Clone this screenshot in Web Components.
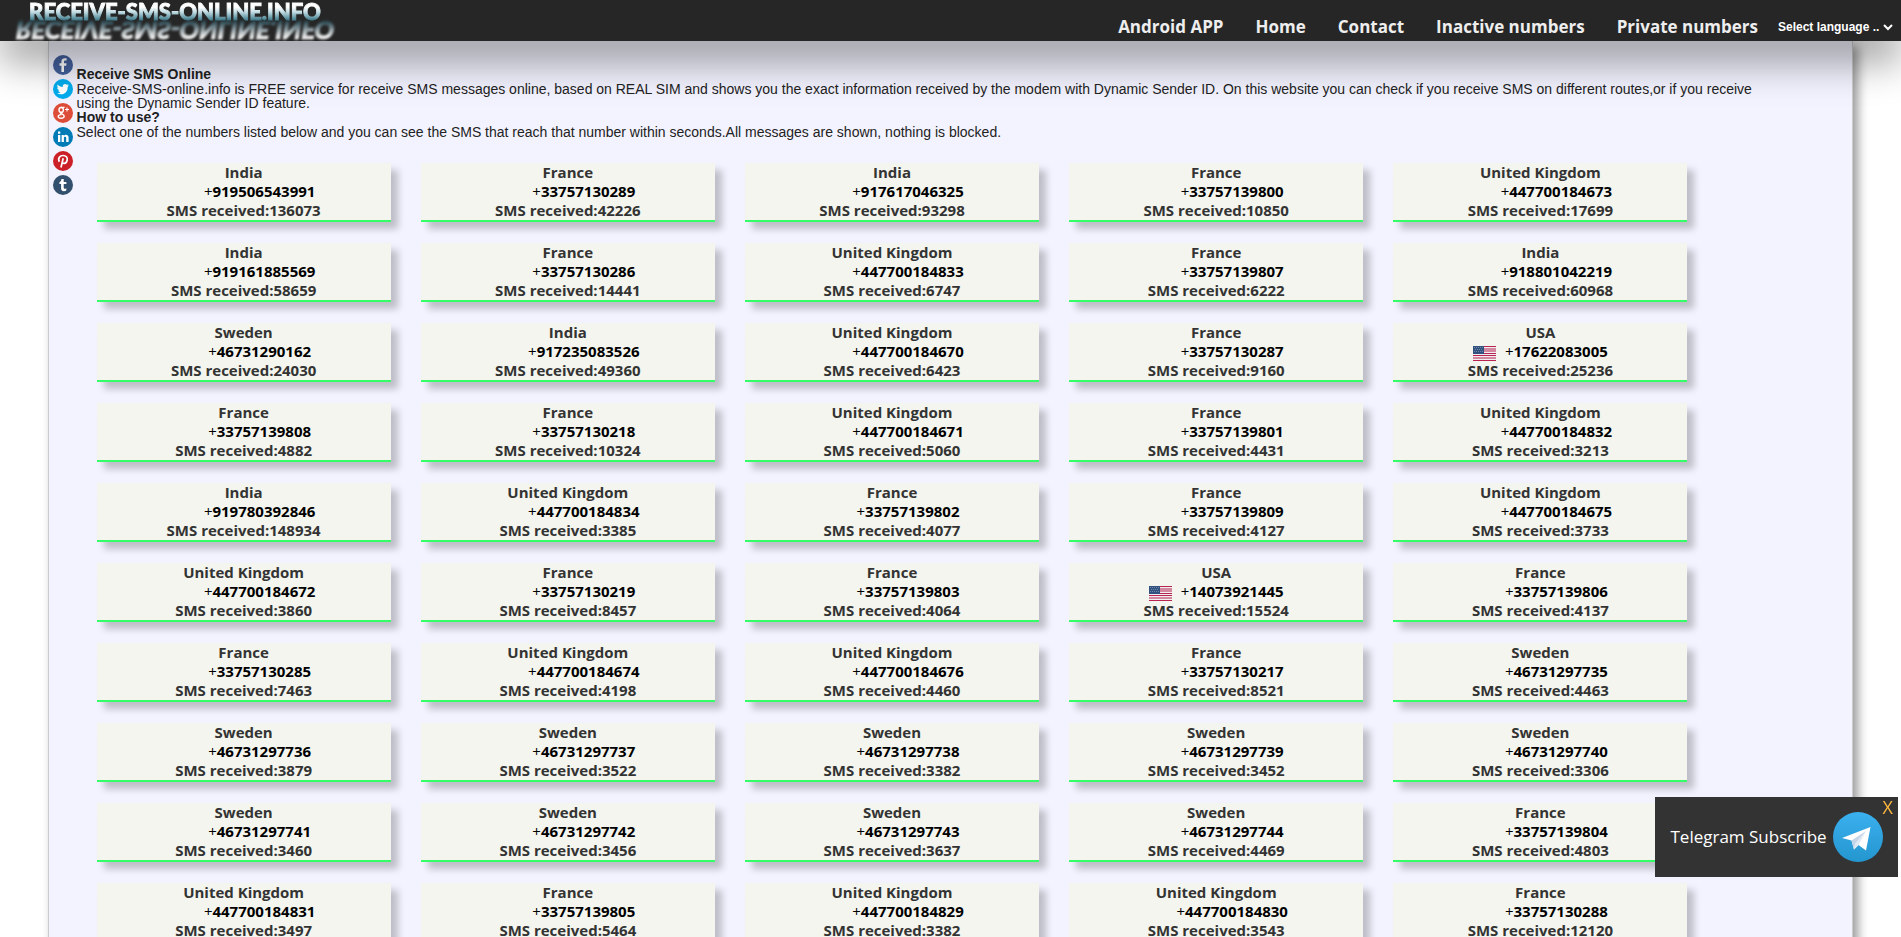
<!DOCTYPE html>
<html lang="en">
<head>
<meta charset="utf-8">
<title>Receive SMS Online</title>
<style>
	body{
		margin:0;
		background:#fff;
		font-family:"Open Sans", "Noto Sans", sans-serif;
		overflow:hidden;
		height:100vh;
	}
</style>
</head>
<body>
	<sms-header></sms-header>
	<sms-page>
		<social-links slot="social"></social-links>
		<sms-intro slot="intro">
			<h1 slot="title">Receive SMS Online</h1>
			<p slot="about">Receive-SMS-online.info is FREE service for receive SMS messages online, based on REAL SIM and shows you the exact information received by the modem with Dynamic Sender ID. On this website you can check if you receive SMS on different routes,or if you receive using the Dynamic Sender ID feature.</p>
			<h2 slot="howto">How to use?</h2>
			<p slot="steps">Select one of the numbers listed below and you can see the SMS that reach that number within seconds.All messages are shown, nothing is blocked.</p>
		</sms-intro>
		<number-list></number-list>
	</sms-page>
	<telegram-box>Telegram Subscribe</telegram-box>

<script>
class smsHeader extends HTMLElement {
	constructor(){
		super();
		this.attachShadow({mode:'open'});
	}
	connectedCallback(){
		this.shadowRoot.innerHTML = `
			<style>
				:host{
					display:block;
					position:relative;
					z-index:2;
					background:#262626;
					box-shadow:0 20px 40px rgba(0,0,0,.4);
				}
				header{
					display:flex;
					justify-content:space-between;
					height:41px;
				}
				.logo{
					display:flex;
					flex-direction:column;
					align-items:center;
					margin-left:18px;
					width:314px;
					text-decoration:none;
					font:900 22px/24px Lato, sans-serif;
					white-space:nowrap;
				}
				.logo span, .logo::after{
					background:linear-gradient(#fff 30%, #c3dde4 50%, #4d8797 80%);
					-webkit-background-clip:text;
					background-clip:text;
					-webkit-text-stroke:1px transparent;
					color:transparent;
				}
				/* mirrored copy under the name */
				.logo::after{
					content:"RECEIVE-SMS-ONLINE.INFO";
					margin-top:-4px;
					font-size:24px;
					line-height:20px;
					background-image:linear-gradient(#e8e8e8 20%, #98a6ab 50%, #2c4a54 90%);
					transform:scaleY(-1) skewX(8deg);
					filter:blur(1px);
				}
				nav{
					display:flex;
					align-items:center;
					padding:12px 8px 0 0;
					height:29px;
				}
				nav a{
					color:#eee;
					font-weight:700;
					font-size:17px;
					line-height:29px;
					text-decoration:none;
					margin-right:32px;
				}
				nav a:last-of-type{
					margin-right:20px;
				}
				label{
					display:flex;
					align-items:center;
				}
				select{
					appearance:none;
					background:none;
					border:0;
					padding:0;
					margin:0;
					color:#fff;
					font:bold 12px/16px "Liberation Sans", Arial, sans-serif;
				}
				label svg{
					width:10px;
					height:8px;
					margin-left:3px;
				}
			</style>
			<header>
				<a class="logo" href="#"><span>RECEIVE-SMS-ONLINE.INFO</span></a>
				<nav>
					<a href="#">Android APP</a>
					<a href="#">Home</a>
					<a href="#">Contact</a>
					<a href="#">Inactive numbers</a>
					<a href="#">Private numbers</a>
					<label>
						<select aria-label="Language"><option>Select language ..</option></select>
						<svg viewBox="0 0 10 8"><path d="M1 2l4 4 4-4" fill="none" stroke="#fff" stroke-width="2"/></svg>
					</label>
				</nav>
			</header>
		`;
	}
}
customElements.define("sms-header", smsHeader)

class smsPage extends HTMLElement {
	constructor(){
		super();
		this.attachShadow({mode:'open'});
		this.shadowRoot.innerHTML = `
			<style>
				:host{
					display:block;
					box-sizing:border-box;
					width:95%;
					margin:0 auto;
					background:#f3f3ff;
					border-left:1px solid #ccc;
					border-right:1px solid #ccc;
					box-shadow:5px 5px 10px rgba(0,0,0,.4);
				}
				.page{
					display:flex;
					gap:4px;
					padding:14px 0 20px 4px;
				}
				.page__content{
					flex:1;
					min-width:0;
				}
			</style>
			<div class="page">
				<slot name="social"></slot>
				<div class="page__content">
					<slot name="intro"></slot>
					<slot></slot>
				</div>
			</div>
		`;
	}
}
customElements.define("sms-page", smsPage)

class socialLinks extends HTMLElement {
	constructor(){
		super();
		this.attachShadow({mode:'open'});
	}
	getIcons(){
		return [
			['Facebook', '#43609c', '<path d="M11 17v-6.200h2.200l.3-2.500H11V6.800c0-.8.3-1.200 1.200-1.200h1.400V3.300c-3.200-.5-5.200.5-5.200 3.200v1.800H6.500v2.500h1.900V17z" fill="#fff"/>'],
			['Twitter', '#00aced', '<path d="M16 6.300l-1.500.4 1-1.500-1.700.6c-1.700-1.600-4.400-.3-4.100 2.200-2.100-.1-3.900-1.100-5.100-2.600-.7 1.300-.3 2.700.8 3.500l-1.200-.3c0 1.400 1 2.400 2.200 2.700l-1.200.1c.4 1.100 1.300 1.700 2.500 1.800-1 .8-2.300 1.200-3.700 1 4.700 2.900 10.700.1 10.700-6.300z" fill="#fff"/>'],
			['Google plus', '#dd4b39', '<g fill="none" stroke="#fff" stroke-width="1.400"><ellipse cx="8.200" cy="6.900" rx="2.200" ry="2.400"/><path d="M8 4.400h3.600M8 9.400c-2 1.300 3.600 1.600 3.200 4-.3 2.400-6 2.400-6 .2 0-1.300 1.300-2 3.300-2"/><path d="M14 4.500v4M12 6.500h4" stroke-width="1.100"/></g>'],
			['LinkedIn', '#007bb6', '<path d="M5 8h2.300v7H5zM5 4.500h2.300v2.200H5zM8.600 8h2.200v1c1-1.700 4.800-1.800 4.800 1.700V15h-2.400v-3.900c0-1.800-2.300-1.600-2.300.1V15H8.600z" fill="#fff"/>'],
			['Pinterest', '#cb2027', '<path d="M6.400 10.800C4.300 7.200 7.200 4.500 10 4.500c3.100 0 4.600 2 4.200 4.500-.5 3.300-3.200 4.200-4.700 2.500M10.200 7.200L8 16.500" fill="none" stroke="#fff" stroke-width="1.700"/>'],
			['Tumblr', '#32506d', '<path d="M8.400 4h2.300v2.900h2.700v2.200h-2.700v3.500c0 1.500 1.300 1.500 2.600.7v2.200c-2.500 1.300-5.200.6-5.200-2V9.100H6.400V7.300C7.700 6.800 8.300 5.700 8.400 4z" fill="#fff"/>']
		];
	}
	connectedCallback(){
		this.shadowRoot.innerHTML = `
			<style>
				:host{
					display:flex;
					flex-direction:column;
					gap:4px;
					width:20px;
				}
				a, svg{
					display:block;
					width:20px;
					height:20px;
				}
			</style>
			${this.getIcons().map(([name, color, icon]) => `
				<a href="#" aria-label="${name}">
					<svg viewBox="0 0 20 20"><circle cx="10" cy="10" r="10" fill="${color}"/>${icon}</svg>
				</a>`).join('')}
		`;
	}
}
customElements.define("social-links", socialLinks)

class smsIntro extends HTMLElement {
	constructor(){
		super();
		this.attachShadow({mode:'open'});
		this.shadowRoot.innerHTML = `
			<style>
				:host{
					display:block;
					padding:12px 72px 0 0;
					font:14px/14px "Liberation Sans", Arial, sans-serif;
					color:#222;
				}
				::slotted(*){
					margin:0;
					font-size:14px;
				}
				::slotted(p){
					padding-top:1px;
				}
			</style>
			<slot name="title"></slot>
			<slot name="about"></slot>
			<slot name="howto"></slot>
			<slot name="steps"></slot>
		`;
	}
}
customElements.define("sms-intro", smsIntro)

class numberCard extends HTMLElement {
	static get observedAttributes(){
		return ['country','number','received'];
	}
	constructor(){
		super();
		this.attachShadow({mode:'open'});
	}
	attributeChangedCallback(attr, oldVal, newVal){
		this[attr] = newVal;
	}
	getFlag(){
		if(this.country !== "USA") return '';
		return `
			<svg viewBox="0 0 23 15">
				<path fill="#f0eef0" d="M0 0h23v15H0z"/>
				<path stroke="#b8234f" d="M0 .5h23M0 3h23M0 5h23M0 7.500h23M0 9.500h23M0 12h23M0 14.500h23"/>
				<path fill="#31517e" d="M0 0h11v8H0z"/>
				<path stroke="#7288a8" stroke-dasharray="1 1" d="M1 1.500h9M2 3.500h8M1 5.500h9"/>
			</svg>`;
	}
	connectedCallback(){
		this.shadowRoot.innerHTML = `
			<style>
				:host{
					display:block;
					background:#f4f5ee;
					border-bottom:2px solid #3f6;
					box-shadow:7px 7px 7px rgba(0,0,0,.22);
					font-size:15px;
					line-height:19px;
					text-align:center;
					color:#333;
				}
				a{
					display:block;
					color:inherit;
					text-decoration:none;
					font-weight:700;
				}
				.card__number{
					display:flex;
					justify-content:center;
					align-items:flex-end;
					color:#000;
					font-weight:400;
				}
				.card__flag{
					width:23px;
					height:15px;
					margin-right:9px;
				}
				svg{
					display:block;
				}
				b{
					font-weight:700;
				}
			</style>
			<a href="#">
				<div>${this.country}</div>
				<div class="card__number"><span class="card__flag">${this.getFlag()}</span><span>+<b>${this.number}</b></span></div>
				<div>SMS received:${this.received}</div>
			</a>
		`;
	}
}
customElements.define("number-card", numberCard)

const numbers = [
	['India','919506543991',136073], ['France','33757130289',42226], ['India','917617046325',93298], ['France','33757139800',10850], ['United Kingdom','447700184673',17699],
	['India','919161885569',58659], ['France','33757130286',14441], ['United Kingdom','447700184833',6747], ['France','33757139807',6222], ['India','918801042219',60968],
	['Sweden','46731290162',24030], ['India','917235083526',49360], ['United Kingdom','447700184670',6423], ['France','33757130287',9160], ['USA','17622083005',25236],
	['France','33757139808',4882], ['France','33757130218',10324], ['United Kingdom','447700184671',5060], ['France','33757139801',4431], ['United Kingdom','447700184832',3213],
	['India','919780392846',148934], ['United Kingdom','447700184834',3385], ['France','33757139802',4077], ['France','33757139809',4127], ['United Kingdom','447700184675',3733],
	['United Kingdom','447700184672',3860], ['France','33757130219',8457], ['France','33757139803',4064], ['USA','14073921445',15524], ['France','33757139806',4137],
	['France','33757130285',7463], ['United Kingdom','447700184674',4198], ['United Kingdom','447700184676',4460], ['France','33757130217',8521], ['Sweden','46731297735',4463],
	['Sweden','46731297736',3879], ['Sweden','46731297737',3522], ['Sweden','46731297738',3382], ['Sweden','46731297739',3452], ['Sweden','46731297740',3306],
	['Sweden','46731297741',3460], ['Sweden','46731297742',3456], ['Sweden','46731297743',3637], ['Sweden','46731297744',4469], ['France','33757139804',4803],
	['United Kingdom','447700184831',3497], ['France','33757139805',5464], ['United Kingdom','447700184829',3382], ['United Kingdom','447700184830',3543], ['France','33757130288',12120]
];

class numberList extends HTMLElement {
	constructor(){
		super();
		this.attachShadow({mode:'open'});
	}
	connectedCallback(){
		this.shadowRoot.innerHTML = `
			<style>
				:host{
					display:grid;
					grid-template-columns:repeat(5, 1fr);
					gap:21px 30px;
					padding:24px 165px 0 20px;
				}
			</style>
			${numbers.map(([country, number, received]) =>
				`<number-card country="${country}" number="${number}" received="${received}"></number-card>`).join('')}
		`;
	}
}
customElements.define("number-list", numberList)

class telegramBox extends HTMLElement {
	constructor(){
		super();
		this.attachShadow({mode:'open'});
	}
	connectedCallback(){
		this.shadowRoot.innerHTML = `
			<style>
				:host{
					position:fixed;
					right:3px;
					bottom:60px;
					z-index:3;
					display:flex;
					height:80px;
					background:#333;
				}
				a{
					display:flex;
					align-items:center;
					gap:6px;
					padding-left:15px;
					color:#fff;
					font-size:17px;
					line-height:24px;
					text-decoration:none;
				}
				svg{
					width:50px;
					height:50px;
				}
				button{
					align-self:flex-start;
					background:none;
					border:0;
					padding:0;
					margin:0 5px 0 0;
					color:#ffb83f;
					font:18px/20px "Open Sans", sans-serif;
				}
			</style>
			<a href="#">
				<slot></slot>
				<svg viewBox="0 0 50 50">
					<defs>
						<linearGradient id="sky" x1="0" y1="0" x2="0" y2="1">
							<stop offset="0" stop-color="#3bb0ef"/>
							<stop offset="1" stop-color="#2496cf"/>
						</linearGradient>
					</defs>
					<circle cx="25" cy="25" r="25" fill="url(#sky)"/>
					<path d="M9 26L37.500 15l-4.500 23.500-7.500-5.500-4.500 4.500-2.500-9z" fill="#fff"/>
					<path d="M18.500 28.500L33 19l-10.500 12.500-1.500 6z" fill="#c5d5e8"/>
					<path d="M22.500 31.500L33 19l-7.500 14-4.500 4.500z" fill="#dfe9f4"/>
				</svg>
			</a>
			<button type="button" aria-label="Close">X</button>
		`;
	}
}
customElements.define("telegram-box", telegramBox)
</script>
</body>
</html>
